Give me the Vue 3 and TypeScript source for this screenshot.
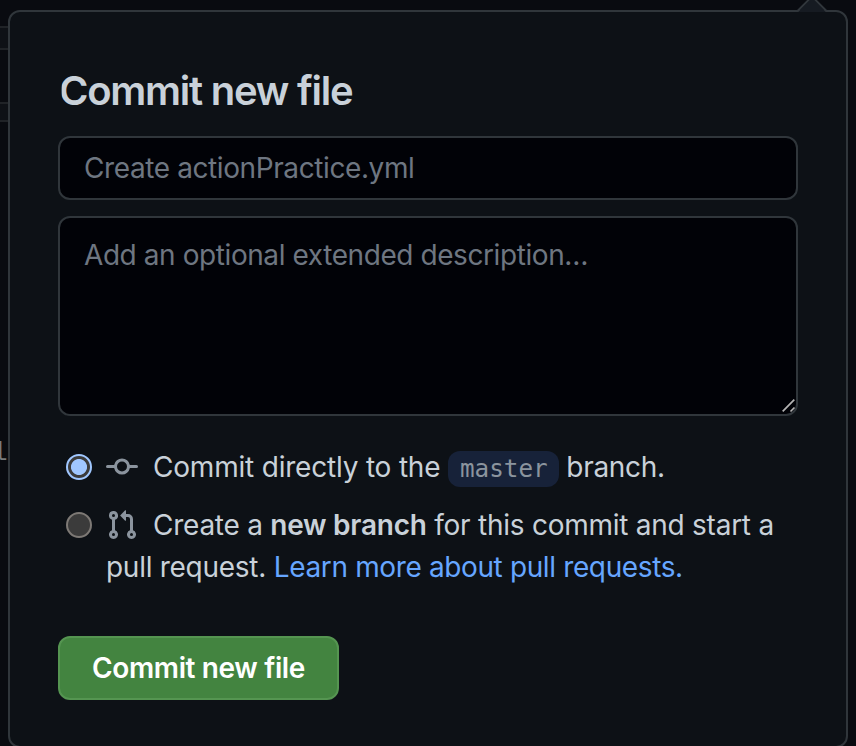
<script setup lang="ts">
import { ref } from 'vue'

type Target = 'direct' | 'branch'

const target = ref<Target>('direct')
const summary = ref('')
const description = ref('')
</script>

<template>
  <div class="page">
    <div class="backdrop">
      <div class="strip strip-tabs"></div>
      <div class="strip strip-tools"></div>
      <span class="code-char">l</span>
    </div>
    <svg class="caret" width="32" height="14" viewBox="0 0 32 14">
      <path d="M2 14 16 0 30 14Z" fill="#161b22" />
      <path d="M1.5 13 16-1.5 30.5 13" fill="none" stroke="#30363b" stroke-width="2" />
    </svg>
    <form class="panel" @submit.prevent>
      <h3 class="title">Commit new file</h3>
      <input v-model="summary" class="field summary" placeholder="Create actionPractice.yml" />
      <div class="area">
        <textarea v-model="description" class="field description" placeholder="Add an optional extended description…"></textarea>
        <svg class="grip" width="16" height="16" viewBox="0 0 16 16" stroke="#b4b4b4" stroke-width="1.7">
          <path d="M1.7 12.3 13.3 .7M9.5 12.5 13.5 8.5" />
        </svg>
      </div>
      <label class="option">
        <input v-model="target" class="radio" type="radio" name="target" value="direct" />
        <span class="option-text">
          <svg class="icon commit" width="32" height="32" viewBox="0 0 16 16" fill="#8b949e">
            <path fill-rule="evenodd" d="M10.5 7.75a2.5 2.5 0 11-5 0 2.5 2.5 0 015 0zm1.43.75a4.002 4.002 0 01-7.86 0H.75a.75.75 0 110-1.5h3.32a4.001 4.001 0 017.86 0h3.32a.75.75 0 110 1.5h-3.32z" />
          </svg><span class="direct">Commit directly to the</span><code class="branch">master</code><span class="tail">branch.</span>
        </span>
      </label>
      <label class="option second">
        <input v-model="target" class="radio" type="radio" name="target" value="branch" />
        <span class="option-text">
          <svg class="icon" width="32" height="32" viewBox="0 0 16 16" fill="#8b949e">
            <path fill-rule="evenodd" d="M7.177 3.073L9.573.677A.25.25 0 0110 .854v4.792a.25.25 0 01-.427.177L7.177 3.427a.25.25 0 010-.354zM3.75 2.5a.75.75 0 100 1.5.75.75 0 000-1.5zm-2.25.75a2.25 2.25 0 113 2.122v5.256a2.251 2.251 0 11-1.5 0V5.372A2.25 2.25 0 011.5 3.25zM11 2.5h-1V4h1a1 1 0 011 1v5.628a2.251 2.251 0 101.5 0V5A2.5 2.5 0 0011 2.5zm1 10.25a.75.75 0 111.5 0 .75.75 0 01-1.5 0zM3.75 12a.75.75 0 100 1.5.75.75 0 000-1.5z" />
          </svg><span class="create">Create a <strong>new branch</strong> for this commit and start a</span><br />
          <span class="pull">pull request.</span> <a class="link">Learn more about pull requests.</a>
        </span>
      </label>
      <button class="submit" type="submit">Commit new file</button>
    </form>
  </div>
</template>

<style>
body {
  background: #090c10;
  overflow: hidden;
}
</style>

<style scoped>
.page {
  position: relative;
  box-sizing: border-box;
  height: 746px;
  padding: 10px 8px 0;
  overflow: hidden;
  background: #090b10;
  color: #c9d1d9;
  font: 28px/42px Inter, "Liberation Sans", sans-serif;
}
.backdrop {
  position: absolute;
  inset: 0 auto 0 0;
  width: 8px;
  overflow: hidden;
}
.strip {
  position: absolute;
  left: 0;
  width: 8px;
  box-sizing: border-box;
  border: solid #202327;
  border-width: 2px 0;
  background: #0e1116;
}
.strip-tabs { top: 26px; height: 24px; }
.strip-tools { top: 102px; height: 20px; }
.code-char {
  position: absolute;
  left: -8px;
  top: 433px;
  color: #777a7d;
  font: 26px/40px "Liberation Mono", monospace;
}
.caret {
  position: absolute;
  left: 796px;
  top: -2px;
  z-index: 1;
}
.panel {
  box-sizing: border-box;
  height: 738px;
  padding: 54px 48px 0;
  border: 2px solid #30363b;
  border-radius: 12px;
  background: #0d1116;
}
.title {
  margin: 0 0 10px 1px;
  font-size: 40px;
  font-weight: 600;
  line-height: 50px;
  height: 60px;
  letter-spacing: -1.25px;
  white-space: nowrap;
  box-sizing: border-box;
  clip-path: inset(0 0 0 2.6px);
}
.field {
  display: block;
  box-sizing: border-box;
  width: 740px;
  margin: 0;
  padding: 0 24px;
  border: 2px solid #30363b;
  border-radius: 12px;
  outline: none;
  background: #010207;
  color: inherit;
  font: inherit;
  resize: none;
}
.field::placeholder { color: #6e7681; opacity: 1; }
.summary { height: 64px; letter-spacing: -0.4px; }
.area { position: relative; margin-top: 16px; }
.description { height: 200px; padding-top: 16px; letter-spacing: -0.42px; overflow: hidden; }
.grip { position: absolute; right: 1px; bottom: 1px; }
.option {
  display: flex;
  align-items: flex-start;
  margin-top: 30px;
  padding-left: 8px;
}
.second { margin-top: 16px; }
.radio {
  appearance: none;
  flex: none;
  box-sizing: border-box;
  width: 26px;
  height: 26px;
  margin: 8px 14px 0 0;
  border: 2px solid #7d7975;
  border-radius: 50%;
  background: #3b3b3b;
}
.radio:checked {
  border-color: #a0c7ff;
  background: radial-gradient(circle, #a0c7ff 7.6px, #3b3b3b 8.4px);
}
.option-text { height: 42px; white-space: nowrap; }
.second .option-text { height: 84px; }
.icon { display: inline-block; width: 32px; height: 32px; margin-right: 15px; vertical-align: -6px; }
.direct { letter-spacing: -0.2px; }
.branch {
  display: inline-block;
  box-sizing: border-box;
  width: 111px;
  height: 36px;
  margin: 0 7px 0 8px;
  border-radius: 12px;
  background: #172239;
  color: #8b949e;
  font: 24.3px/36px "DejaVu Sans Mono", monospace;
  text-align: center;
  vertical-align: 0;
}
.create { letter-spacing: -0.25px; }
.tail { letter-spacing: -0.3px; }
.pull { letter-spacing: -0.28px; }
.create strong { font-weight: 600; }
.link { color: #66a6ff; letter-spacing: -0.37px; }
.submit {
  display: block;
  width: 281px;
  height: 64px;
  margin: 48px 0 0;
  padding: 0;
  border: 2px solid #559551;
  border-radius: 12px;
  background: #438440;
  color: #fff;
  font: 600 28px/40px Inter, "Liberation Sans", sans-serif;
  letter-spacing: -0.36px;
}
</style>
